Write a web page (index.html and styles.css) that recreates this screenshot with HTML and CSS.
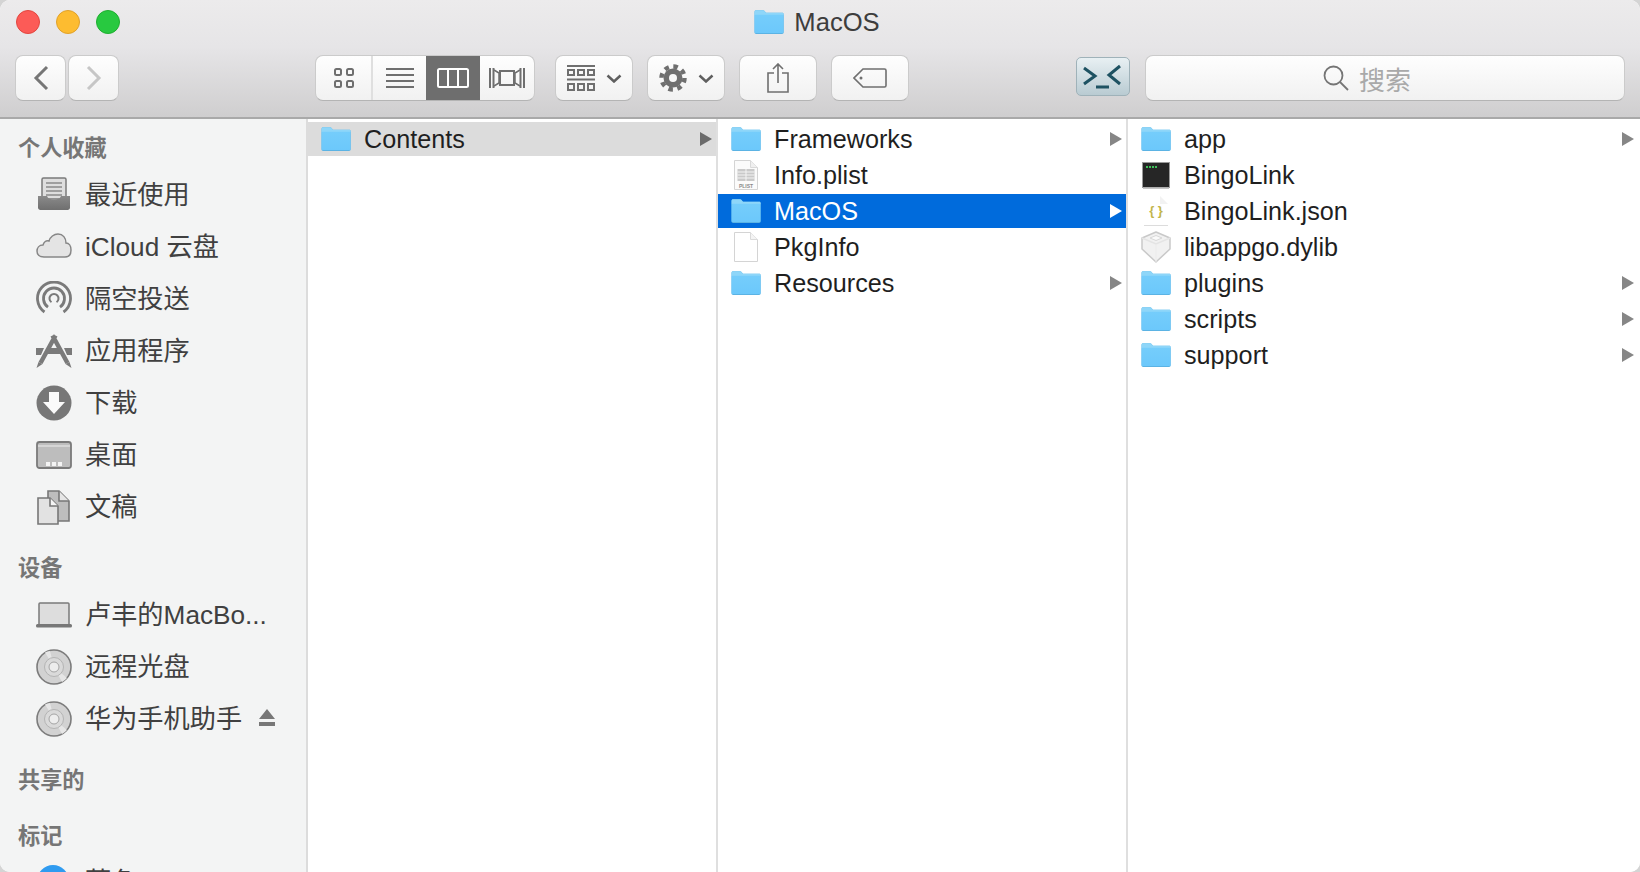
FILE: index.html
```html
<!DOCTYPE html>
<html lang="zh">
<head>
<meta charset="utf-8">
<title>MacOS</title>
<link rel="stylesheet" href="styles.css">
</head>
<body>
<svg class="defs" aria-hidden="true">
  <defs>
    <linearGradient id="fg" x1="0" y1="0" x2="0" y2="1">
      <stop offset="0" stop-color="#75cdfb"/>
      <stop offset="1" stop-color="#6cc8fb"/>
    </linearGradient>
    <linearGradient id="tray" x1="0" y1="0" x2="0" y2="1">
      <stop offset="0" stop-color="#8a8a8a"/>
      <stop offset="1" stop-color="#6f6f6f"/>
    </linearGradient>
    <symbol id="folder" viewBox="0.5 0.5 29 23" preserveAspectRatio="none">
      <path d="M1 2.5C1 1.4 1.6.8 2.6.8h6.6c.8 0 1.2.3 1.7.9l1.2 1.5h15.5c1.1 0 1.6.6 1.6 1.6v17c0 1-.6 1.6-1.6 1.6H2.6c-1 0-1.6-.6-1.6-1.6z" fill="#5bb3e4"/>
      <path d="M1 2.5C1 1.4 1.6.8 2.6.8h6.6c.8 0 1.2.3 1.7.9l1.2 1.5h15.5c1.1 0 1.6.6 1.6 1.6v.7H1z" fill="#8ed6f9"/>
      <rect x="1" y="5" width="28" height="17.6" rx="1" fill="url(#fg)"/>
    </symbol>
    <symbol id="disc" viewBox="0 0 36 36">
      <circle cx="18" cy="18" r="17" fill="#d2d2d2" stroke="#7c7c7c" stroke-width="1.6"/>
      <path d="M18 18 9 3.5A17 17 0 0 1 14 2zM18 18l8 15a17 17 0 0 0 5-4z" fill="#e6e6e6"/>
      <circle cx="18" cy="18" r="9.5" fill="#dadada" stroke="#b4b4b4"/>
      <circle cx="18" cy="18" r="5" fill="#ededed" stroke="#a4a4a4"/>
    </symbol>
  </defs>
</svg>

<div class="window">
  <header class="chrome">
    <div class="titlebar">
      <div class="lights">
        <span class="light red"></span>
        <span class="light yellow"></span>
        <span class="light green"></span>
      </div>
      <div class="title">
        <svg class="folder"><use href="#folder"/></svg>
        <span>MacOS</span>
      </div>
      <div></div>
    </div>

    <div class="toolbar">
      <div class="group nav">
        <div class="btn nav-btn">
          <svg width="16" height="26" viewBox="0 0 16 26"><path d="M14 2 3 13l11 11" fill="none" stroke="#767676" stroke-width="3"/></svg>
        </div>
        <div class="btn nav-btn">
          <svg width="16" height="26" viewBox="0 0 16 26"><path d="m2 2 11 11L2 24" fill="none" stroke="#c6c6c6" stroke-width="3"/></svg>
        </div>
      </div>

      <div class="btn views">
        <div class="seg seg-a">
          <svg width="20" height="20" viewBox="0 0 20 20" fill="none" stroke="#6f6f6f" stroke-width="2">
            <rect x="1" y="1" width="6" height="6" rx="1.5"/><rect x="13" y="1" width="6" height="6" rx="1.5"/>
            <rect x="1" y="13" width="6" height="6" rx="1.5"/><rect x="13" y="13" width="6" height="6" rx="1.5"/>
          </svg>
        </div>
        <div class="seg seg-b">
          <svg width="28" height="20" viewBox="0 0 28 20" fill="#6f6f6f">
            <rect y="0" width="28" height="2"/><rect y="6" width="28" height="2"/>
            <rect y="12" width="28" height="2"/><rect y="18" width="28" height="2"/>
          </svg>
        </div>
        <div class="seg seg-c active">
          <svg width="32" height="20" viewBox="0 0 32 20" fill="none" stroke="#fff" stroke-width="2">
            <rect x="1" y="1" width="30" height="18" rx="1.5"/><path d="M11 1v18M21 1v18"/>
          </svg>
        </div>
        <div class="seg seg-d">
          <svg width="36" height="20" viewBox="0 0 36 20" fill="none" stroke="#6f6f6f" stroke-width="2">
            <path d="M1 0v20M4.500 0v20M31.500 0v20M35 0v20"/>
            <rect x="11" y="3" width="14" height="14"/>
            <path d="m5 2 5 3v10l-5 3M31 2l-5 3v10l5 3" stroke-width="1.500"/>
          </svg>
        </div>
      </div>

      <div class="group actions">
        <div class="btn act">
          <svg width="28" height="26" viewBox="0 0 28 26" fill="none" stroke="#6f6f6f">
            <path d="M0 1h28M0 14.500h28" stroke-width="2"/>
            <path d="M1 5h6v5H1zM11 5h6v5h-6zM21 5h6v5h-6zM1 19h6v6H1zM11 19h6v6h-6zM21 19h6v6h-6z" stroke-width="2"/>
          </svg>
          <svg class="chev" width="16" height="9" viewBox="0 0 16 9"><path d="m1.500 1.500 6.500 6 6.500-6" fill="none" stroke="#5f5f5f" stroke-width="2.500"/></svg>
        </div>
        <div class="btn act">
          <svg width="28" height="28" viewBox="0 0 28 28">
            <circle cx="14" cy="14" r="9.500" fill="#6f6f6f"/>
            <circle cx="14" cy="14" r="11.500" fill="none" stroke="#6f6f6f" stroke-width="4.500" stroke-dasharray="4.500 4.530"/>
            <circle cx="14" cy="14" r="4" fill="#f7f7f7"/>
          </svg>
          <svg class="chev" width="16" height="9" viewBox="0 0 16 9"><path d="m1.500 1.500 6.500 6 6.500-6" fill="none" stroke="#5f5f5f" stroke-width="2.500"/></svg>
        </div>
        <div class="btn act">
          <svg width="22" height="30" viewBox="0 0 22 30" fill="none" stroke="#6f6f6f" stroke-width="1.600">
            <path d="M7 10H1v19h20V10h-6M11 20V1.500M6 6l5-5 5 5"/>
          </svg>
        </div>
        <div class="btn act">
          <svg width="34" height="20" viewBox="0 0 34 20" fill="none" stroke="#6f6f6f" stroke-width="1.600">
            <path d="M10 1h21.500c1 0 1.500.6 1.500 1.500v15c0 1-.5 1.500-1.500 1.500H10L1 10z"/>
            <circle cx="8" cy="10" r="1.500" fill="#6f6f6f" stroke="none"/>
          </svg>
        </div>
      </div>

      <div class="terminal">
        <svg width="54" height="39" viewBox="0 0 54 39" fill="none" stroke="#1e5262" stroke-width="3">
          <path d="m8 11 11 8-11 8M44 9 33 18l11 9M20 30h13"/>
        </svg>
      </div>

      <div class="btn search">
        <svg width="26" height="26" viewBox="0 0 26 26" fill="none" stroke="#757575" stroke-width="1.800">
          <circle cx="10.500" cy="10.500" r="9"/><path d="m17 17 8 8"/>
        </svg>
        <span>搜索</span>
      </div>
    </div>
  </header>

  <main class="body">
    <nav class="sidebar">
      <h2 class="heading">个人收藏</h2>
      <div class="item">
        <svg class="side-icon" viewBox="0 0 36 36">
          <path d="M6 2.500C6 1.500 6.500 1 7.500 1h21c1 0 1.500.5 1.500 1.500V22H6z" fill="#dedede" stroke="#7a7a7a" stroke-width="1.500"/>
          <path d="M10 6h16M10 10h16M10 14h16M10 18h16" stroke="#8a8a8a" stroke-width="1.500"/>
          <path d="M2 19h9c1.500 5 12.500 5 14 0h9v11.500c0 1.600-1 2.500-2.500 2.500h-27C3 33 2 32.100 2 30.500z" fill="url(#tray)"/>
        </svg>
        <span>最近使用</span>
      </div>
      <div class="item">
        <svg class="side-icon" viewBox="0 0 36 36">
          <path transform="translate(0 -3)" d="M8 31C3 31 1 28 1 25c0-3 2-6 6-6 1-3 3-5 6-4 1-4 5-7 9-7 5 0 8 4 8 9 3 0 5 3 5 7s-2 7-6 7z" fill="#e4e4e4" stroke="#868686" stroke-width="1.500"/>
        </svg>
        <span>iCloud 云盘</span>
      </div>
      <div class="item">
        <svg class="side-icon" viewBox="0 0 36 36" fill="none" stroke="#7a7a7a" stroke-width="2.800">
          <path d="M8.500 31A16.500 16.500 0 1 1 27.500 31"/>
          <path d="M12 26.100A10.500 10.500 0 1 1 24 26.100"/>
          <path d="M15.500 21.200A4.500 4.500 0 1 1 20.500 21.200" stroke-width="2"/>
        </svg>
        <span>隔空投送</span>
      </div>
      <div class="item">
        <svg class="side-icon" viewBox="0 0 36 36">
          <path d="M0 15h8l-3 7H0zM28 15h8v7h-5zM13 15h10l3 6H10z" fill="#7a7a7a"/>
          <path d="M16.500 2.500 31.500 30M19.500 2.500 4.500 30" fill="none" stroke="#7a7a7a" stroke-width="4.500"/>
          <path d="m29.500 31 4-2 2 6zM6.500 31l-4-2-2 6z" fill="#7a7a7a"/>
        </svg>
        <span>应用程序</span>
      </div>
      <div class="item">
        <svg class="side-icon" viewBox="0 0 36 36">
          <circle cx="18" cy="18" r="17.500" fill="#777"/>
          <path d="M13 7h10v10h6L18 29 7 17h6z" fill="#fafafa"/>
        </svg>
        <span>下载</span>
      </div>
      <div class="item">
        <svg class="side-icon" viewBox="0 0 36 36">
          <rect x="1" y="5" width="34" height="26" rx="2.500" fill="#bdbdbd" stroke="#7a7a7a" stroke-width="1.800"/>
          <path d="M2 9h32" stroke="#eee"/>
          <path d="M10 25h4v4h-4zM16 25h4v4h-4zM22 25h4v4h-4z" fill="#f4f4f4"/>
        </svg>
        <span>桌面</span>
      </div>
      <div class="item">
        <svg class="side-icon" viewBox="0 0 36 36" stroke="#777" stroke-width="1.600">
          <path d="M12 2h11l10 10v20H12z" fill="#bdbdbd"/>
          <path d="M23 2v10h10" fill="#e6e6e6"/>
          <path d="M2 9h12l8 8v18H2z" fill="#e2e2e2"/>
          <path d="M14 9v8h8" fill="#f4f4f4"/>
        </svg>
        <span>文稿</span>
      </div>

      <h2 class="heading section">设备</h2>
      <div class="item">
        <svg class="side-icon" viewBox="0 0 36 36">
          <rect x="3" y="6" width="30" height="22" rx="1" fill="#dddddd" stroke="#7a7a7a" stroke-width="1.500"/>
          <rect x="0" y="27" width="36" height="3.500" rx="1.500" fill="#777"/>
        </svg>
        <span>卢丰的MacBo...</span>
      </div>
      <div class="item">
        <svg class="side-icon"><use href="#disc"/></svg>
        <span>远程光盘</span>
      </div>
      <div class="item">
        <svg class="side-icon"><use href="#disc"/></svg>
        <span>华为手机助手</span>
        <svg class="eject" width="16" height="18" viewBox="0 0 16 18" fill="#777"><path d="M8 0l8 10H0zM0 13h16v4H0z"/></svg>
      </div>

      <h2 class="heading section">共享的</h2>
      <h2 class="heading section-b">标记</h2>
      <div class="item item-tag">
        <i class="tag-dot"></i>
        <span>蓝色</span>
      </div>
    </nav>

    <section class="col">
      <div class="row row-dim">
        <span class="slot"><svg class="folder"><use href="#folder"/></svg></span>
        <span class="name">Contents</span>
        <i class="arrow arrow-dark"></i>
      </div>
    </section>

    <section class="col">
      <div class="row">
        <span class="slot"><svg class="folder"><use href="#folder"/></svg></span>
        <span class="name">Frameworks</span>
        <i class="arrow"></i>
      </div>
      <div class="row">
        <span class="slot">
          <svg width="24" height="30" viewBox="0 0 24 30">
            <path d="M.5.500h16l7 7v22H.500z" fill="#fbfbfb" stroke="#d4d4d4"/>
            <path d="M16.500.500v7h7" fill="#f0f0f0" stroke="#dadada"/>
            <rect x="3.500" y="9" width="17" height="12" fill="#c9c9c9"/>
            <path d="M3.500 12h17M3.500 15h17M3.500 18h17M12 9v12" stroke="#f4f4f4"/>
            <text class="plist" x="12" y="27.500" text-anchor="middle">PLIST</text>
          </svg>
        </span>
        <span class="name">Info.plist</span>
      </div>
      <div class="row row-sel">
        <span class="slot"><svg class="folder"><use href="#folder"/></svg></span>
        <span class="name">MacOS</span>
        <i class="arrow arrow-white"></i>
      </div>
      <div class="row">
        <span class="slot">
          <svg width="24" height="30" viewBox="0 0 24 30">
            <path d="M.5.500h16l7 7v22H.500z" fill="#fff" stroke="#d4d4d4"/>
            <path d="M16.500.500v7h7" fill="#f4f4f4" stroke="#dadada"/>
          </svg>
        </span>
        <span class="name">PkgInfo</span>
      </div>
      <div class="row">
        <span class="slot"><svg class="folder"><use href="#folder"/></svg></span>
        <span class="name">Resources</span>
        <i class="arrow"></i>
      </div>
    </section>

    <section class="col col-last">
      <div class="row">
        <span class="slot"><svg class="folder"><use href="#folder"/></svg></span>
        <span class="name">app</span>
        <i class="arrow"></i>
      </div>
      <div class="row">
        <span class="slot">
          <svg width="28" height="27" viewBox="0 0 28 27">
            <rect x=".5" y=".5" width="27" height="25" fill="#262626" stroke="#9a9a9a"/>
            <rect x="1" y="25.500" width="26" height="1.500" fill="#c4c4c4"/>
            <path d="M4 5h2M7 5h2M10 5h2M13 5h2" stroke="#3fc25a" stroke-width="2"/>
          </svg>
        </span>
        <span class="name">BingoLink</span>
      </div>
      <div class="row">
        <span class="slot">
          <svg width="24" height="30" viewBox="0 0 24 30">
            <path d="M0 0h16l8 8v21H0z" fill="#fff"/>
            <path d="M16 0v8h8" fill="#f2f2f2"/>
            <path d="M0 29.500h24" stroke="#dcdcdc"/>
            <text class="braces" x="12" y="19" text-anchor="middle">{ }</text>
          </svg>
        </span>
        <span class="name">BingoLink.json</span>
      </div>
      <div class="row">
        <span class="slot">
          <svg width="30" height="32" viewBox="0 0 30 32">
            <path d="M15 1 29 7v11L15 31 1 18V7z" fill="#f1f1f1" stroke="#c9c9c9" stroke-width="1.500" stroke-linejoin="round"/>
            <path d="M1 7l14 6 14-6" fill="none" stroke="#e4e4e4" stroke-width="1.500"/>
            <path d="M9 7l6-2.500L21 7l-6 2.500z" fill="#fafafa" stroke="#d8d8d8"/>
            <path d="M15 13v18" stroke="#ebebeb"/>
          </svg>
        </span>
        <span class="name">libappgo.dylib</span>
      </div>
      <div class="row">
        <span class="slot"><svg class="folder"><use href="#folder"/></svg></span>
        <span class="name">plugins</span>
        <i class="arrow"></i>
      </div>
      <div class="row">
        <span class="slot"><svg class="folder"><use href="#folder"/></svg></span>
        <span class="name">scripts</span>
        <i class="arrow"></i>
      </div>
      <div class="row">
        <span class="slot"><svg class="folder"><use href="#folder"/></svg></span>
        <span class="name">support</span>
        <i class="arrow"></i>
      </div>
    </section>
  </main>
</div>
</body>
</html>
```

FILE: styles.css
```css
* { box-sizing: border-box; }

html, body {
  margin: 0;
  height: 100%;
  background: #d4d4d4;
  overflow: hidden;
}

body {
  font-family: "Liberation Sans", "Noto Sans CJK SC", sans-serif;
}

.defs {
  display: block;
  width: 0;
  height: 0;
}

.window {
  width: 1640px;
  height: 872px;
  display: flex;
  flex-direction: column;
  overflow: hidden;
  border-radius: 10px;
  background: #fff;
}

.chrome {
  height: 119px;
  flex: none;
  background: linear-gradient(#ecebec, #e6e5e7 40%, #cfcecf);
  border-bottom: 2px solid #a9a9a9;
}

.titlebar {
  height: 55px;
  display: grid;
  grid-template-columns: 1fr auto 1fr;
  align-items: start;
}

.lights {
  display: flex;
  gap: 16px;
  padding: 10px 0 0 16px;
}

.light {
  width: 24px;
  height: 24px;
  border-radius: 50%;
  border: 1px solid;
}
.red { background: #fc5b57; border-color: #e2463f; }
.yellow { background: #fdbc30; border-color: #e0a12a; }
.green { background: #28c940; border-color: #1fae30; }

.title {
  display: flex;
  align-items: center;
  gap: 10px;
  height: 24px;
  margin-top: 10px;
  padding-right: 6px;
  font-size: 25.6px;
  color: #3d3d3d;
}

.folder {
  display: block;
  width: 30px;
  height: 24px;
}

.toolbar {
  display: flex;
  align-items: flex-start;
  padding-left: 15px;
}

.group { display: flex; }
.nav { gap: 2px; }
.actions { gap: 14px; margin-left: 20px; }

.btn {
  height: 46px;
  display: flex;
  align-items: center;
  justify-content: center;
  background: linear-gradient(#fefefe, #f1f1f1);
  border: 1px solid #cbcbcb;
  border-bottom-color: #b4b4b4;
  border-radius: 8px;
}

.nav-btn { width: 51px; }

.views {
  width: 220px;
  margin-left: 196px;
  overflow: hidden;
  align-items: stretch;
  justify-content: flex-start;
}

.seg {
  display: flex;
  align-items: center;
  justify-content: center;
}
.seg-a { width: 57px; border-right: 2px solid #dfdfdf; }
.seg-b { width: 53px; }
.seg-c { width: 54px; }
.seg-d { flex: 1; }
.active { background: #6e6e6e; }

.act { width: 78px; }
.chev { margin-left: 11px; }

.terminal {
  width: 54px;
  height: 39px;
  margin: 2px 0 0 167px;
  border: 1px solid #9fb2b9;
  border-radius: 5px;
  background: linear-gradient(#e8f0f3, #b9cbd2);
}
.terminal svg { display: block; margin: -1px; }

.search {
  width: 480px;
  margin-left: 15px;
  justify-content: flex-start;
  padding-left: 177px;
  gap: 10px;
  font-size: 26px;
  color: #a9a9a9;
}

.body {
  flex: 1;
  min-height: 0;
  display: flex;
}

.sidebar {
  width: 308px;
  flex: none;
  padding-top: 14px;
  background: #f3f4f4;
  border-right: 2px solid #dcdcdc;
  overflow: hidden;
}

.heading {
  margin: 0 0 6px;
  padding: 1px 0 0 18px;
  height: 30px;
  line-height: 30px;
  font-size: 22.2px;
  font-weight: 700;
  color: #767676;
}
.section { margin-top: 20px; }
.section-b { margin-top: 26px; }

.item {
  height: 52px;
  display: flex;
  align-items: center;
  padding-left: 36px;
  gap: 13px;
  font-size: 26.2px;
  color: #404040;
  white-space: nowrap;
}
.item span { padding-bottom: 4px; }
.item-tag { margin-top: 6px; align-items: flex-start; }
.item-tag span { margin-top: 4px; }

.side-icon {
  display: block;
  width: 36px;
  height: 36px;
  flex: none;
}

.eject { margin: 0 0 3px 4px; }

.tag-dot {
  width: 32px;
  height: 32px;
  margin: 8px 3px 0 1px;
  border-radius: 50%;
  background: #2f9bf0;
}

.col {
  width: 410px;
  flex: none;
  padding-top: 3px;
  border-right: 2px solid #dfdfdf;
  background: #fff;
}

.col-last {
  width: auto;
  flex: 1;
  border-right: 0;
}

.row {
  height: 34px;
  margin-bottom: 2px;
  padding: 0 4px 0 13px;
  display: flex;
  align-items: center;
  font-size: 25.2px;
  color: #1f1f1f;
}
.col-last .row { padding-right: 6px; }

.row-dim { background: #dcdcdc; }
.row-sel { background: #006bdc; color: #fff; }

.slot {
  width: 30px;
  flex: none;
  display: flex;
  justify-content: center;
}

.name {
  flex: 1;
  margin-left: 13px;
}

.arrow {
  width: 0;
  height: 0;
  border-left: 12px solid #868686;
  border-top: 7px solid transparent;
  border-bottom: 7px solid transparent;
}
.arrow-dark { border-left-color: #6b6b6b; }
.arrow-white { border-left-color: #fff; }

.plist {
  font-size: 5px;
  font-weight: 700;
  fill: #8a8a8a;
}

.braces {
  font-size: 13px;
  font-weight: 700;
  fill: #c2b54a;
}
```
